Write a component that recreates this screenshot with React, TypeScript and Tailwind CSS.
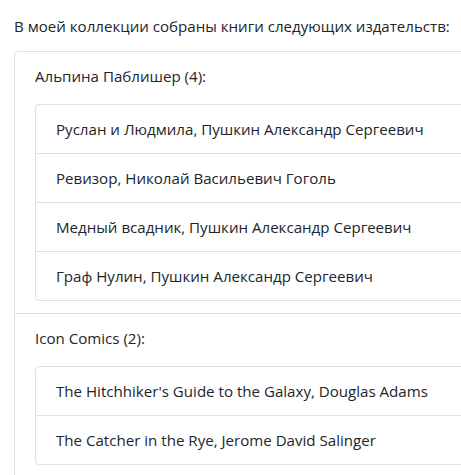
import React from "react";

const groups = [
  {
    name: "Альпина Паблишер (4):",
    books: [
      "Руслан и Людмила, Пушкин Александр Сергеевич",
      "Ревизор, Николай Васильевич Гоголь",
      "Медный всадник, Пушкин Александр Сергеевич",
      "Граф Нулин, Пушкин Александр Сергеевич",
    ],
  },
  {
    name: "Icon Comics (2):",
    books: [
      "The Hitchhiker's Guide to the Galaxy, Douglas Adams",
      "The Catcher in the Rye, Jerome David Salinger",
    ],
  },
];

export default function App() {
  return (
    <div
      className="w-[461px] h-[475px] overflow-hidden bg-white text-[#212529] text-[15.1px] leading-[24px]"
      style={{ fontFamily: '"Open Sans", "Noto Sans", sans-serif' }}
    >
      <div className="w-[520px] pl-[14px] pt-[14px]">
        <p className="mb-[13px] whitespace-nowrap">В моей коллекции собраны книги следующих издательств:</p>
        <div className="border border-[#dfdfdf] rounded-[4px]">
          {groups.map((g, i) => (
            <div
              key={g.name}
              className={`px-[20px] pt-[12px] pb-[12px] ${i > 0 ? "border-t border-[#dfdfdf]" : ""}`}
            >
              <p className="mb-[16px]">{g.name}</p>
              <div className="border border-[#dfdfdf] rounded-[4px]">
                {g.books.map((b, j) => (
                  <div
                    key={b}
                    className={`px-[20px] py-[12px] whitespace-nowrap ${j > 0 ? "border-t border-[#dfdfdf]" : ""}`}
                  >
                    {b}
                  </div>
                ))}
              </div>
            </div>
          ))}
        </div>
      </div>
    </div>
  );
}
